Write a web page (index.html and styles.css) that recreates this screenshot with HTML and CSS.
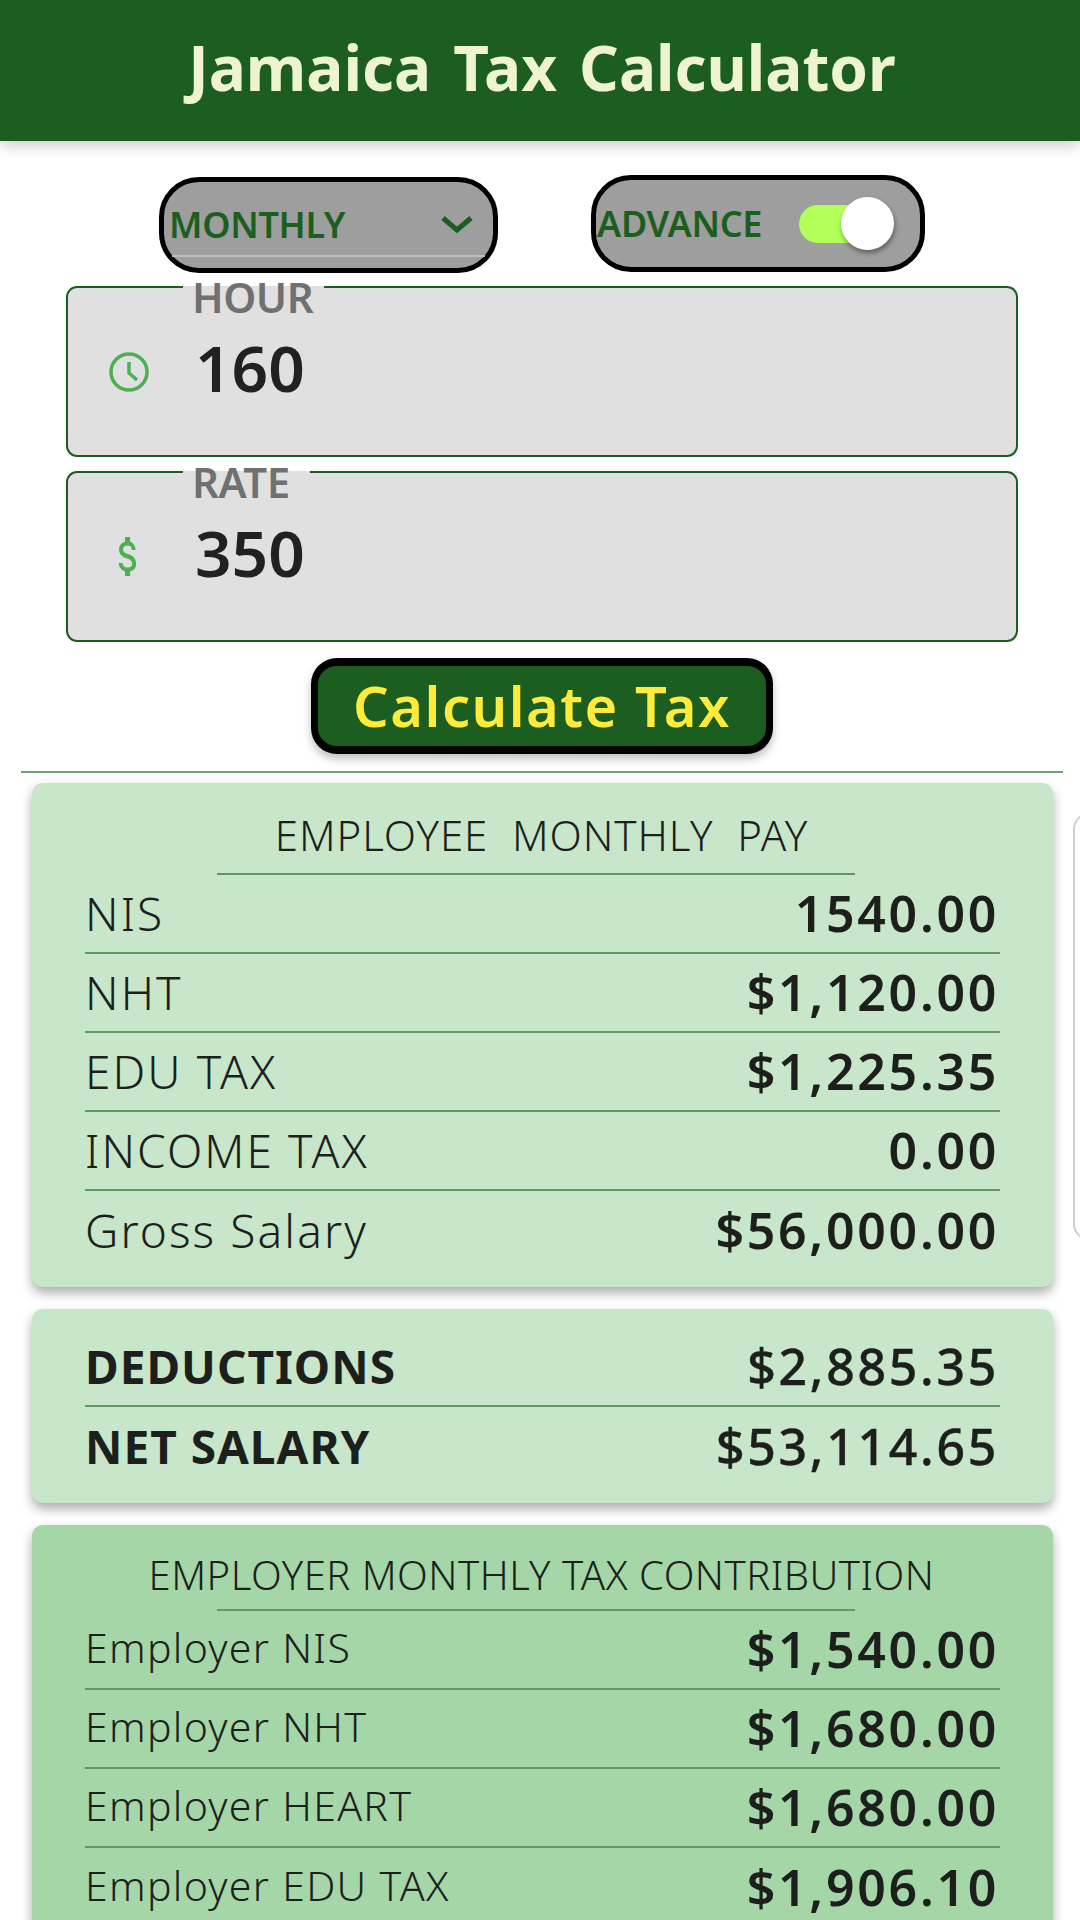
FILE: index.html
```html
<!DOCTYPE html>
<html lang="en">
<head>
<meta charset="utf-8">
<title>Jamaica Tax Calculator</title>
<link rel="stylesheet" href="styles.css">
</head>
<body>
<header class="app-bar"><h1 class="app-title">Jamaica Tax Calculator</h1></header>
<main class="form">
  <div class="controls">
    <div class="select">
      <span class="ctl-text">MONTHLY</span>
      <svg class="chevron" viewBox="0 0 32 18"><polyline points="2,3 16,15 30,3"/></svg>
      <span class="select-line"></span>
    </div>
    <div class="advance">
      <span class="ctl-text">ADVANCE</span>
      <span class="switch"><span class="thumb"></span></span>
    </div>
  </div>
  <div class="field">
    <span class="notch notch-hour"></span><span class="label">HOUR</span>
    <svg class="field-icon" viewBox="0 0 40 40"><circle cx="20" cy="20" r="18"/><polyline points="20,10 20,21 28,28"/></svg>
    <span class="value">160</span>
  </div>
  <div class="field">
    <span class="notch notch-rate"></span><span class="label">RATE</span>
    <svg class="field-icon dollar" viewBox="5.3 3 12.9 18" preserveAspectRatio="none"><path d="M11.8 10.9c-2.27-.59-3-1.2-3-2.15 0-1.09 1.01-1.85 2.7-1.85 1.78 0 2.44.85 2.5 2.1h2.21c-.07-1.72-1.12-3.3-3.21-3.81V3h-3v2.16c-1.94.42-3.5 1.68-3.5 3.61 0 2.31 1.91 3.46 4.7 4.13 2.5.6 3 1.48 3 2.41 0 .69-.49 1.79-2.7 1.79-2.06 0-2.87-.92-2.98-2.1h-2.2c.12 2.19 1.76 3.42 3.68 3.83V21h3v-2.15c1.95-.37 3.5-1.5 3.5-3.55 0-2.84-2.43-3.81-4.7-4.4z"/></svg>
    <span class="value">350</span>
  </div>
  <button class="calc">Calculate Tax</button>
  <div class="divider"></div>
</main>
<div class="pager">
  <section class="slide">
    <div class="card pale">
      <h2 class="card-title spaced">EMPLOYEE MONTHLY PAY</h2>
      <div class="row"><span class="name">NIS</span><span class="amt">1540.00</span></div>
      <div class="row"><span class="name">NHT</span><span class="amt">$1,120.00</span></div>
      <div class="row"><span class="name">EDU TAX</span><span class="amt">$1,225.35</span></div>
      <div class="row"><span class="name">INCOME TAX</span><span class="amt">0.00</span></div>
      <div class="row"><span class="name">Gross Salary</span><span class="amt">$56,000.00</span></div>
    </div>
    <div class="card pale summary">
      <div class="row"><span class="name strong">DEDUCTIONS</span><span class="amt mid">$2,885.35</span></div>
      <div class="row"><span class="name strong">NET SALARY</span><span class="amt mid">$53,114.65</span></div>
    </div>
    <div class="card deep">
      <h2 class="card-title">EMPLOYER MONTHLY TAX CONTRIBUTION</h2>
      <div class="row small"><span class="name">Employer NIS</span><span class="amt">$1,540.00</span></div>
      <div class="row small"><span class="name">Employer NHT</span><span class="amt">$1,680.00</span></div>
      <div class="row small"><span class="name">Employer HEART</span><span class="amt">$1,680.00</span></div>
      <div class="row small"><span class="name">Employer EDU TAX</span><span class="amt">$1,906.10</span></div>
    </div>
  </section>
  <aside class="next-slide"></aside>
</div>
</body>
</html>
```
FILE: styles.css
```css
* { box-sizing: border-box; }
html, body { margin: 0; padding: 0; }
body {
  width: 1080px;
  height: 1920px;
  overflow: hidden;
  background: #fff;
  font-family: "Noto Sans", "Open Sans", sans-serif;
  color: #1c1f1c;
}
.app-bar {
  height: 141px;
  background: #1b5e20;
  box-shadow: 0 4px 14px rgba(0,0,0,.22);
  display: flex;
  align-items: center;
  justify-content: center;
}
.app-title {
  margin: 0 0 8px 4px;
  font-size: 62px;
  font-weight: 700;
  color: #eef4cf;
  word-spacing: 6px;
}
.form { display: flex; flex-direction: column; align-items: center; padding-left: 4px; }
.controls {
  width: 100%;
  display: flex;
  align-items: flex-start;
  padding: 34px 0 0 155px;
  gap: 93px;
  height: 145px;
}
.select, .advance {
  background: #9e9e9e;
  border: 5px solid #000;
  display: flex;
  align-items: center;
  position: relative;
}
.select {
  width: 339px;
  height: 96px;
  margin-top: 2px;
  border-radius: 40px;
  padding: 0 0 2px 5px;
}
.advance {
  width: 334px;
  height: 97px;
  border-radius: 40px;
  padding: 0 0 0 1px;
}
.ctl-text {
  font-size: 36px;
  font-weight: 600;
  letter-spacing: -.3px;
  color: #1b5e20;
  white-space: nowrap;
}
.chevron {
  width: 32px;
  height: 18px;
  margin-left: auto;
  margin-right: 20px;
  fill: none;
  stroke: #1b5e20;
  stroke-width: 5;
}
.select-line {
  position: absolute;
  left: 8px;
  right: 8px;
  bottom: 11px;
  height: 2px;
  background: #bdbdbd;
}
.switch {
  position: relative;
  width: 71px;
  height: 38px;
  margin-left: 37px;
  border-radius: 19px 0 0 19px;
  background: #b2ff59;
}
.thumb {
  position: absolute;
  left: 42px;
  top: -8px;
  width: 53px;
  height: 53px;
  border-radius: 50%;
  background: #fff;
  box-shadow: 1px 3px 5px rgba(0,0,0,.4);
}
.field {
  position: relative;
  width: 952px;
  height: 171px;
  margin-bottom: 14px;
  background: #e0e0e0;
  border: 2px solid #1b5e20;
  border-radius: 11px;
  display: flex;
  align-items: center;
}
.notch {
  position: absolute;
  top: -2px;
  left: 115px;
  height: 4px;
  background: #e0e0e0;
}
.notch-hour { width: 141px; }
.notch-rate { width: 127px; }
.label {
  position: absolute;
  top: -19px;
  left: 124px;
  font-size: 42px;
  line-height: 56px;
  font-weight: 600;
  letter-spacing: -.5px;
  color: #707070;
}
.field-icon {
  width: 40px;
  height: 40px;
  margin-left: 41px;
  fill: none;
  stroke: #4caf50;
  stroke-width: 3.5;
}
.dollar {
  width: 22px;
  height: 39px;
  margin-left: 49px;
  fill: #4caf50;
  stroke: none;
}
.value {
  margin-left: 46px;
  margin-bottom: 8px;
  font-size: 64px;
  font-weight: 600;
  color: #212121;
}
.dollar + .value { margin-left: 56px; }
.calc {
  width: 462px;
  height: 96px;
  margin-top: 2px;
  background: #1b5e20;
  border: 7px solid #000;
  border-top-width: 8px;
  border-bottom-width: 8px;
  border-radius: 26px;
  box-shadow: 0 5px 8px rgba(0,0,0,.25);
  font: 600 56px "Noto Sans", sans-serif;
  letter-spacing: 1.5px;
  color: #ffeb3b;
  padding: 0 0 3px;
}
.divider {
  width: 1042px;
  height: 2px;
  margin-top: 17px;
  background: #6f9f72;
}
.pager {
  display: flex;
  align-items: flex-start;
  padding: 10px 0 0 32px;
  gap: 20px;
  width: 100%;
  overflow: hidden;
}
.slide { width: 1021px; flex: none; display: flex; flex-direction: column; gap: 22px; }
.next-slide {
  flex: none;
  width: 100px;
  height: 427px;
  margin-top: 30px;
  border: 2px solid #cfcfcf;
  border-radius: 16px;
  background: #fff;
}
.card {
  border-radius: 11px;
  padding: 0 53px 17px;
  box-shadow: 0 6px 12px rgba(0,0,0,.33);
}
.pale { background: #c8e6c9; }
.deep { background: #a5d6a7; }
.summary { padding-top: 19px; padding-bottom: 17px; }
.card-title {
  margin: 0 auto;
  width: 638px;
  height: 92px;
  transform: translateX(-7px);
  border-bottom: 2px solid #5f9a63;
  display: flex;
  align-items: center;
  justify-content: center;
  padding: 12px 0 0 12px;
  font-size: 42px;
  font-weight: 300;
  letter-spacing: .9px;
  white-space: nowrap;
}
.spaced { word-spacing: 12px; }
.deep .card-title { height: 86px; font-size: 40px; letter-spacing: .5px; padding-top: 14px; }
.row {
  height: 79px;
  display: flex;
  align-items: center;
  justify-content: space-between;
  border-bottom: 2px solid #5f9a63;
  padding: 0 3px 2px 0;
}
.row:last-child { border-bottom: 0; }
.name { font-size: 46px; font-weight: 300; letter-spacing: 2.1px; }
.amt { font-size: 50px; font-weight: 600; letter-spacing: 2.7px; margin-right: -2px; }
.strong { font-weight: 700; font-size: 46px; letter-spacing: 1px; }
.mid { font-weight: 500; -webkit-text-stroke: .4px #1c1f1c; }
.small .name { font-size: 41px; letter-spacing: 1.3px; margin-top: -3px; }
```
